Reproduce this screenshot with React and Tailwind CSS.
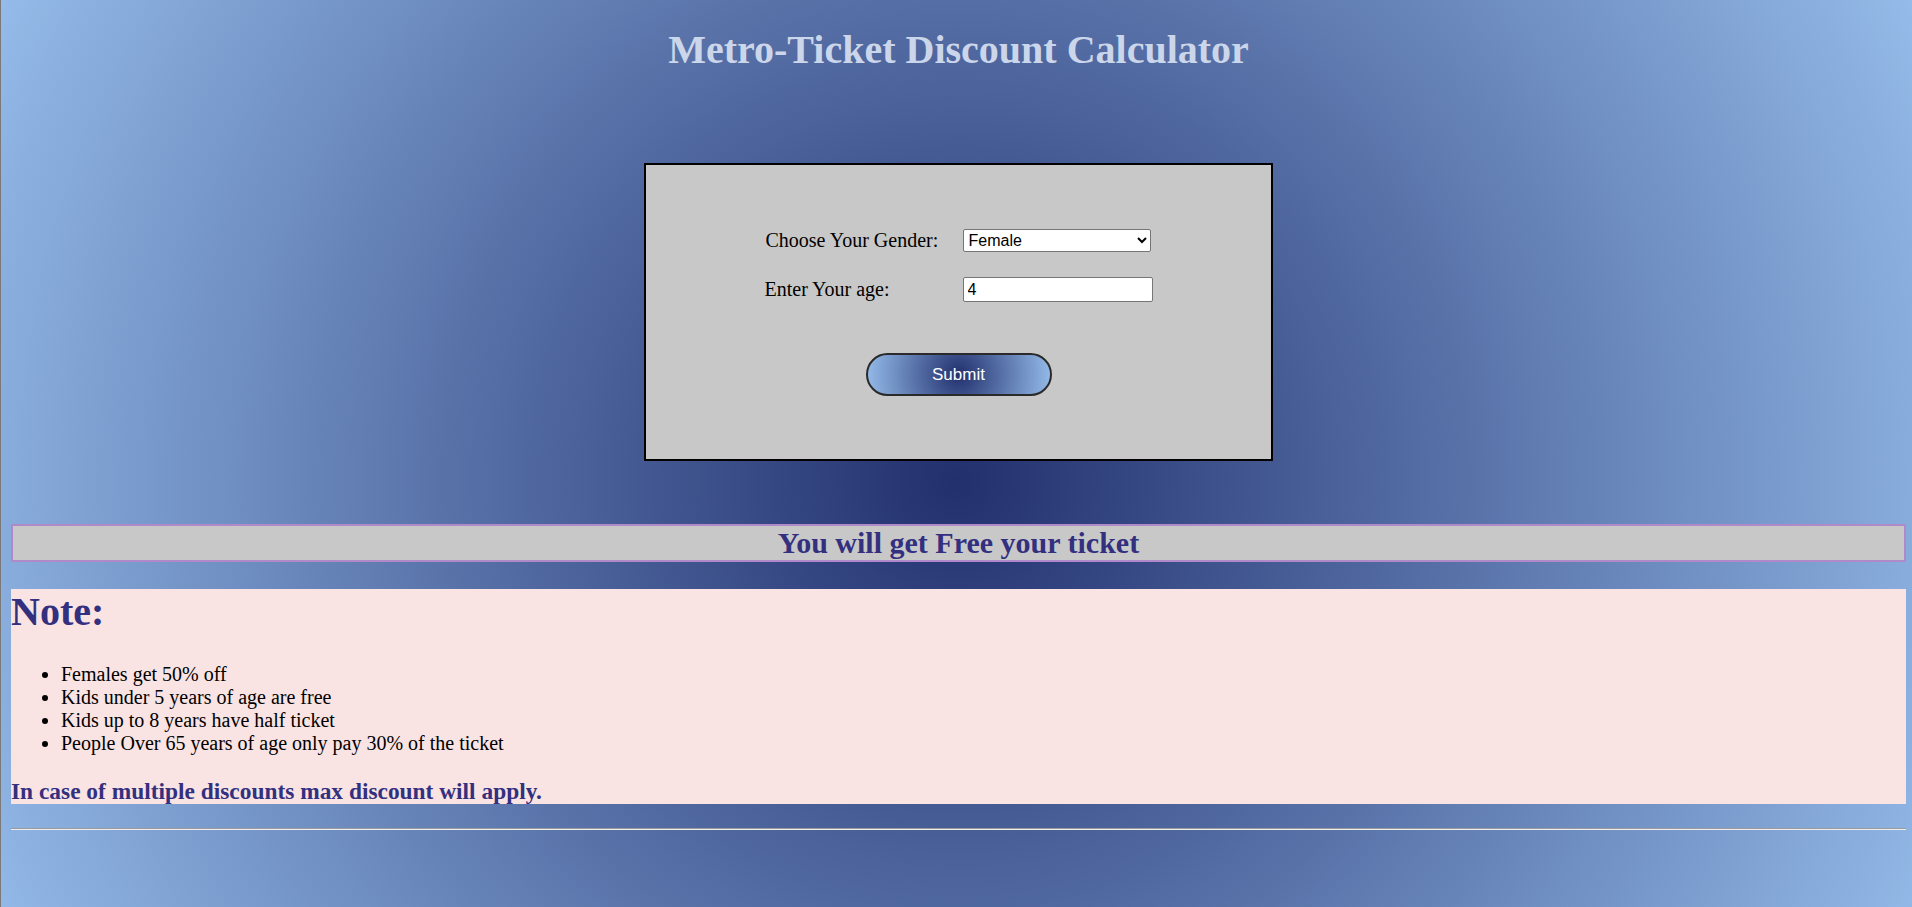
import { useState } from 'react';

export default function App() {
  const [gender, setGender] = useState('Female');
  const [age, setAge] = useState('4');

  return (
    <div
      className="min-h-screen border-l border-[#7a7a7a] pl-[10px] pr-[6px] pb-[10px] bg-[radial-gradient(circle_at_50%_53%,#22306e_0%,#94bbe9_100%)] text-[20px] text-black"
      style={{ fontFamily: '"Liberation Serif", "Times New Roman", serif' }}
    >
      {/* header */}
      <h1 className="pt-[27px] text-center text-[40px] leading-[46px] font-bold text-[#ccd6ea]">
        Metro-Ticket Discount Calculator
      </h1>

      {/* form card */}
      <div className="mx-auto mt-[90px] w-[629px] h-[298px] border-2 border-black bg-[#c8c8c8] flex flex-col items-center">
        <div className="mt-[64px] grid grid-cols-[198px_190px] gap-y-[25px] items-center">
          <label className="leading-[23px] pl-[1px]">Choose Your Gender:</label>
          <select
            value={gender}
            onChange={e => setGender(e.target.value)}
            className="w-[188px] h-[23px] border border-[#767676] rounded-[2px] bg-white text-[16px] text-black pl-[1px]"
            style={{ fontFamily: '"Liberation Sans", Arial, sans-serif' }}
          >
            <option>Female</option>
            <option>Male</option>
          </select>

          <label className="leading-[25px]">Enter Your age:</label>
          <input
            value={age}
            onChange={e => setAge(e.target.value)}
            className="w-[190px] h-[25px] border border-[#767676] rounded-[2px] bg-white text-[16px] text-black px-[4px]"
            style={{ fontFamily: '"Liberation Sans", Arial, sans-serif' }}
          />
        </div>

        <button
          className="mt-[51px] w-[186px] h-[43px] rounded-full border-2 border-[#2a2a2a] bg-[radial-gradient(circle,#22306e,#94bbe9)] text-white text-[17px]"
          style={{ fontFamily: '"Liberation Sans", Arial, sans-serif' }}
        >
          Submit
        </button>
      </div>

      {/* result */}
      <div className="mt-[63px] border-2 border-[#b08ac8] bg-[#c8c8c8] text-center">
        <h2 className="text-[30px] leading-[34px] font-bold text-[#33307f]">You will get Free your ticket</h2>
      </div>

      {/* notes */}
      <div className="mt-[27px] bg-[#f9e3e3]">
        <h1 className="text-[40px] leading-[46px] font-bold text-[#33307f]">Note:</h1>
        <ul className="mt-[28px] pl-[50px] list-disc leading-[23px]">
          <li>Females get 50% off</li>
          <li>Kids under 5 years of age are free</li>
          <li>Kids up to 8 years have half ticket</li>
          <li>People Over 65 years of age only pay 30% of the ticket</li>
        </ul>
        <h3 className="mt-[24px] text-[23.4px] leading-[25px] font-bold text-[#33307f]">
          In case of multiple discounts max discount will apply.
        </h3>
      </div>

      <hr className="mt-[24px] border-t border-t-[#9a9a9a] border-b border-b-[#eeeeee]" />
    </div>
  );
}
